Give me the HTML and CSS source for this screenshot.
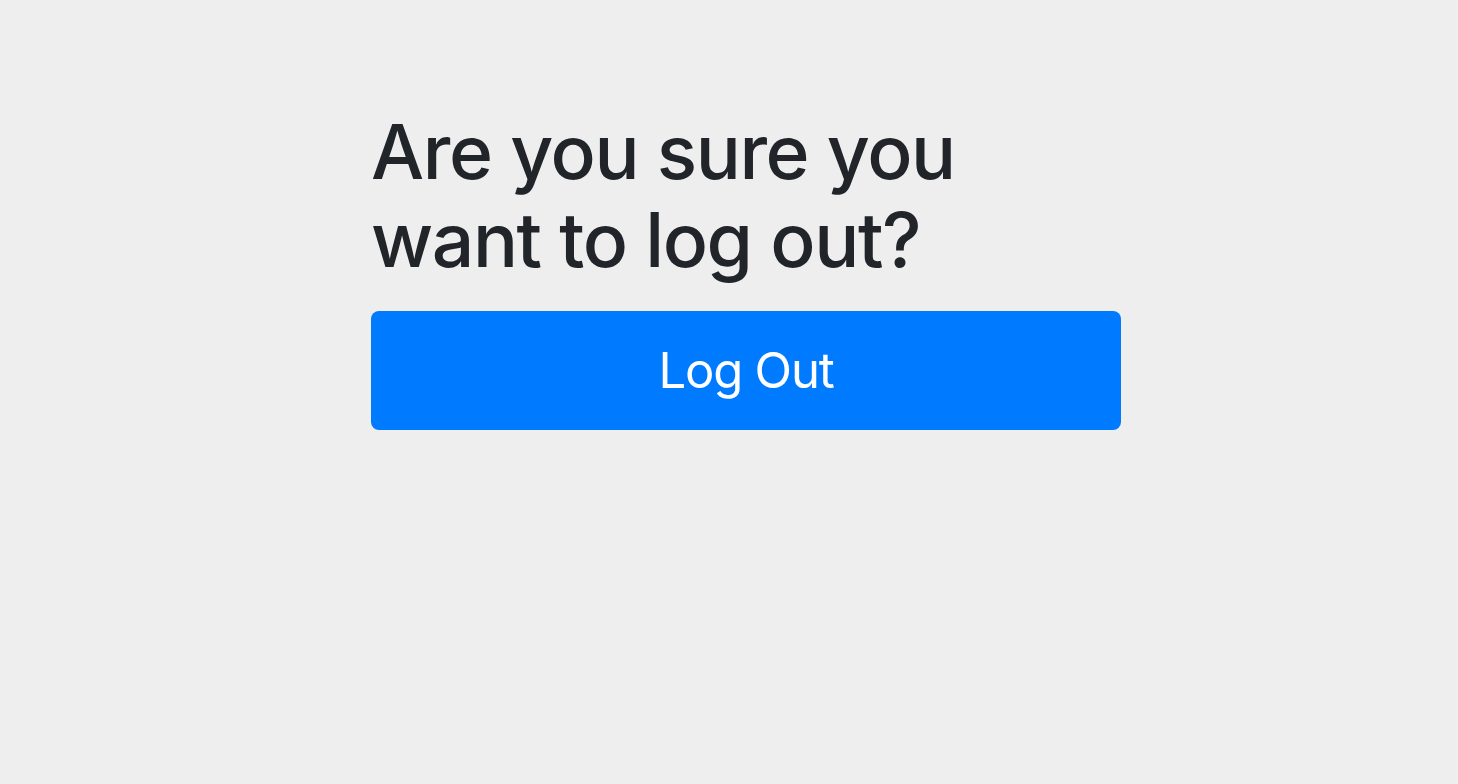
FILE: index.html
```html
<!DOCTYPE html>
<html lang="en">
<head>
<meta charset="utf-8">
<title>Log Out</title>
<link rel="stylesheet" href="styles.css">
</head>
<body>
<main class="page">
  <section class="logout">
    <h1 class="logout-title">Are you sure you want to log out?</h1>
    <button class="logout-btn" type="button">Log Out</button>
  </section>
</main>
</body>
</html>
```

FILE: styles.css
```css
html, body {
  margin: 0;
  padding: 0;
  background: #eeeeee;
  height: 100%;
}
body {
  font-family: Inter, "Helvetica Neue", Arial, sans-serif;
  color: #212529;
}
.page {
  padding: 108px 0 0 371px;
}
.logout {
  width: 750px;
  display: flex;
  flex-direction: column;
}
.logout-title {
  margin: 0 0 27px;
  font-size: 75px;
  line-height: 88px;
  font-weight: 500;
  letter-spacing: -1.4px;
}
.logout-btn {
  height: 119px;
  border: none;
  border-radius: 8px;
  background: #007bff;
  color: #fff;
  font-family: inherit;
  font-size: 49px;
  font-weight: 400;
  letter-spacing: -1.2px;
  cursor: pointer;
}
```
